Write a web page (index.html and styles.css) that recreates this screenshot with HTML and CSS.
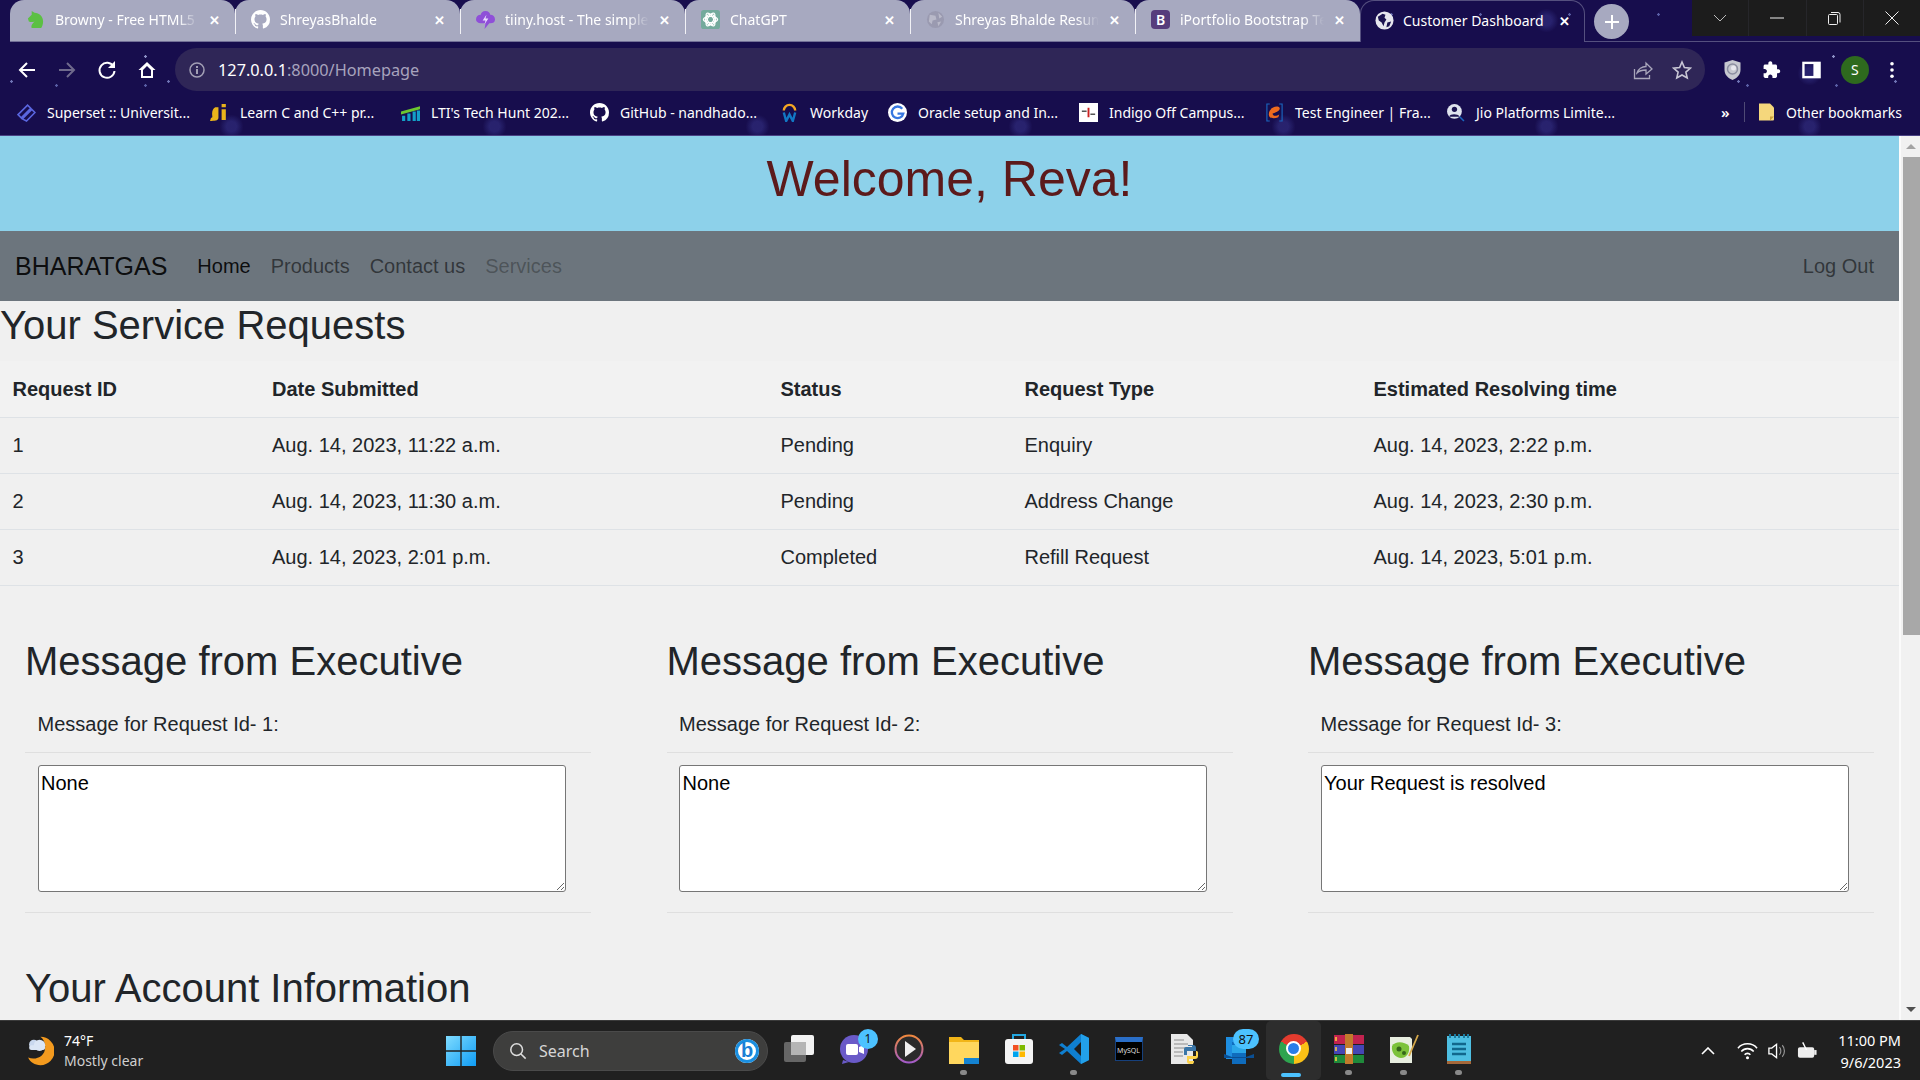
FILE: index.html
```html
<!DOCTYPE html>
<html lang="en">
<head>
<meta charset="utf-8">
<title>Customer Dashboard</title>
<link rel="stylesheet" href="styles.css">
</head>
<body>
<div class="window">
  <header class="chrome">
    <div class="tabstrip">
      <div class="tab">
        <svg class="fav" viewBox="0 0 20 20"><path fill="#5cc043" d="M6 1l3 2c5 0 9 4 9 9 0 3-1 5-2 7H6c-1-3 1-5 3-7-2 1-4 1-6 0L2 9l4-4z"/></svg>
        <span class="tab-title">Browny - Free HTML5</span><span class="tab-x">✕</span>
      </div>
      <div class="tab">
        <svg class="fav" viewBox="0 0 16 16"><path fill="#fff" d="M8 0C3.58 0 0 3.58 0 8c0 3.54 2.29 6.53 5.47 7.59.4.07.55-.17.55-.38 0-.19-.01-.82-.01-1.49-2.01.37-2.53-.49-2.69-.94-.09-.23-.48-.94-.82-1.13-.28-.15-.68-.52-.01-.53.63-.01 1.08.58 1.23.82.72 1.21 1.87.87 2.33.66.07-.52.28-.87.51-1.07-1.78-.2-3.64-.89-3.64-3.95 0-.87.31-1.59.82-2.15-.08-.2-.36-1.02.08-2.12 0 0 .67-.21 2.2.82.64-.18 1.32-.27 2-.27.68 0 1.36.09 2 .27 1.53-1.04 2.2-.82 2.2-.82.44 1.1.16 1.92.08 2.12.51.56.82 1.27.82 2.15 0 3.07-1.87 3.75-3.65 3.95.29.25.54.73.54 1.48 0 1.07-.01 1.93-.01 2.2 0 .21.15.46.55.38A8.013 8.013 0 0016 8c0-4.42-3.58-8-8-8z"/></svg>
        <span class="tab-title">ShreyasBhalde</span><span class="tab-x">✕</span>
      </div>
      <div class="tab">
        <svg class="fav" viewBox="0 0 20 20"><path fill="#8f4fd8" d="M10 1c3 0 5 2 5 4 3 0 5 2 5 5s-2 4-5 4h-1l-5 6 1-6H5c-3 0-5-2-5-4 0-3 2-5 5-5 0-2 2-4 5-4z"/><path fill="#e9dcff" d="M11 5l-4 6h3l-1 4 4-6h-3z"/></svg>
        <span class="tab-title">tiiny.host - The simple</span><span class="tab-x">✕</span>
      </div>
      <div class="tab">
        <svg class="fav" viewBox="0 0 20 20"><rect width="20" height="20" rx="3" fill="#74aa9c"/><g fill="none" stroke="#fff" stroke-width="1.300"><circle cx="10" cy="10" r="5.500"/><ellipse cx="10" cy="10" rx="7.500" ry="3.200" transform="rotate(60 10 10)"/><ellipse cx="10" cy="10" rx="7.500" ry="3.200" transform="rotate(-60 10 10)"/><ellipse cx="10" cy="10" rx="7.500" ry="3.200"/></g></svg>
        <span class="tab-title">ChatGPT</span><span class="tab-x">✕</span>
      </div>
      <div class="tab">
        <svg class="fav" viewBox="0 0 20 20"><circle cx="10" cy="10" r="9" fill="#9a9ab0"/><path fill="#b9b9c9" d="M4 5l6 1 1 4-4 1-1 4-3-3zM13 3l4 4-3 2zM12 13l4-1-3 5z"/></svg>
        <span class="tab-title">Shreyas Bhalde Resum</span><span class="tab-x">✕</span>
      </div>
      <div class="tab">
        <span class="fav fav-b">B</span>
        <span class="tab-title">iPortfolio Bootstrap Te</span><span class="tab-x">✕</span>
      </div>
      <div class="tab tab-active">
        <svg class="fav" viewBox="0 0 20 20"><circle cx="10" cy="10" r="9.500" fill="#e6e6ee"/><path fill="#1b1350" d="M3 6l5-3 3 1-1 3 2 2-2 3-1 4-2-4-3-2zM13 12l4-1-2 5-3 1z"/></svg>
        <span class="tab-title tab-title-active">Customer Dashboard</span><span class="tab-x">✕</span>
      </div>
      <div class="newtab"><svg viewBox="0 0 16 16" class="ico16"><path d="M8 1v14M1 8h14" stroke="#fff" stroke-width="2" fill="none"/></svg></div>
      <div class="winctl">
        <span class="ctl"><svg viewBox="0 0 14 8" class="ctl-i1"><path d="M1 1l6 6 6-6" fill="none" stroke="#bbb"/></svg></span>
        <span class="ctl"><svg viewBox="0 0 14 14" class="ctl-i"><path d="M0 7h14" stroke="#eee"/></svg></span>
        <span class="ctl"><svg viewBox="0 0 14 14" class="ctl-i"><path d="M3 1.500h7a2 2 0 0 1 2 2v8M.5 4.500a1 1 0 0 1 1-1h7a1 1 0 0 1 1 1v8a1 1 0 0 1-1 1h-7a1 1 0 0 1-1-1z" fill="none" stroke="#eee"/></svg></span>
        <span class="ctl"><svg viewBox="0 0 14 14" class="ctl-i"><path d="M.5.5l13 13M13.500.5l-13 13" stroke="#eee"/></svg></span>
      </div>
    </div>

    <div class="toolbar">
      <div class="nav-btns">
        <svg class="nav-i" viewBox="0 0 20 20"><path d="M18 10H3M10 3l-7 7 7 7" fill="none" stroke="#fff" stroke-width="2"/></svg>
        <svg class="nav-i" viewBox="0 0 20 20"><path d="M2 10h15M10 3l7 7-7 7" fill="none" stroke="#6f6a8c" stroke-width="2"/></svg>
        <svg class="nav-i" viewBox="0 0 20 20"><path d="M16.500 6.500A7.500 7.500 0 1 0 17.500 11" fill="none" stroke="#fff" stroke-width="2"/><path d="M18 1v7h-7z" fill="#fff"/></svg>
        <svg class="nav-i" viewBox="0 0 20 20"><path d="M10 2L1.500 10H4v8h12v-8h2.500zM6 10l4-4 4 4v6H6z" fill="#fff"/></svg>
      </div>
      <div class="omnibox">
        <svg class="info" viewBox="0 0 16 16"><circle cx="8" cy="8" r="7" fill="none" stroke="#a29fb5" stroke-width="1.500"/><path d="M7 7h2v5H7zM7 4h2v2H7z" fill="#a29fb5"/></svg>
        <span class="url"><span class="url-host">127.0.0.1</span>:8000/Homepage</span>
        <svg class="share" viewBox="0 0 20 20"><path d="M1.500 9v9.500h15V15M4 13c1-4 5-6.500 9-6.500V3l6 6-6 5v-4c-4 0-7 1-9 3z" fill="none" stroke="#a9a6bb" stroke-width="1.300"/></svg>
        <svg class="star" viewBox="0 0 20 20"><path d="M10 2l2.400 5.500 6 .6-4.500 4 1.300 5.900L10 15l-5.200 3 1.300-5.900-4.500-4 6-.6z" fill="none" stroke="#c9c7d5" stroke-width="1.600"/></svg>
      </div>
      <div class="ext">
        <svg class="ext-i" viewBox="0 0 18 20"><path d="M9 0l8 2.500V10c0 5-4 8.500-8 10-4-1.500-8-5-8-10V2.500z" fill="#c6c8d0"/><circle cx="9" cy="9" r="5" fill="none" stroke="#8b8ea0" stroke-width="1.500"/><circle cx="10" cy="8" r="2.500" fill="#e8e8ee"/></svg>
        <svg class="ext-i" viewBox="0 0 24 24"><path fill="#fff" d="M20.500 11H19V7c0-1.100-.9-2-2-2h-4V3.500C13 2.120 11.880 1 10.500 1S8 2.120 8 3.500V5H4c-1.100 0-1.990.9-1.990 2v3.800H3.500c1.490 0 2.700 1.210 2.700 2.700s-1.210 2.700-2.700 2.700H2V20c0 1.100.9 2 2 2h3.800v-1.500c0-1.490 1.210-2.700 2.700-2.700s2.700 1.210 2.700 2.700V22H17c1.100 0 2-.9 2-2v-4h1.500c1.380 0 2.500-1.120 2.500-2.500S21.880 11 20.500 11z"/></svg>
        <svg class="ext-i" viewBox="0 0 20 20"><rect x="1.500" y="2.500" width="17" height="15" fill="none" stroke="#fff" stroke-width="2.500"/><rect x="12" y="3" width="6" height="14" fill="#fff"/></svg>
        <span class="avatar">S</span>
        <svg class="dots" viewBox="0 0 6 20"><circle cx="3" cy="3" r="2" fill="#fff"/><circle cx="3" cy="10" r="2" fill="#fff"/><circle cx="3" cy="17" r="2" fill="#fff"/></svg>
      </div>
    </div>

    <div class="bookmarks">
      <div class="bm-grid">
        <div class="bm"><svg class="bm-i" viewBox="0 0 18 18"><g fill="none" stroke="#5a66e0" stroke-width="1.500"><path d="M1 11L10 2l3 3-9 9zM5 15l9-9 3 3-8 8z"/></g></svg>Superset :: Universit...</div>
        <div class="bm"><svg class="bm-i" viewBox="0 0 18 18"><path d="M5 4h3v10c0 3-4 3-8 3l1-3c2 0 1-1 1-4 0-3 1-5 3-6zM11 1h4v3h-4zM11 6h4v10h-4z" fill="#e9b31b"/></svg>Learn C and C++ pr...</div>
        <div class="bm"><svg class="bm-i" viewBox="0 0 18 18"><path d="M0 8l18-5v3L0 11z" fill="#6cc62f"/><path d="M1 12h3v5H1zM6 10h3v7H6zM11 8h3v9h-3zM15 7h3v10h-3z" fill="#13a0c8"/></svg>LTI's Tech Hunt 202...</div>
        <div class="bm"><svg class="bm-i" viewBox="0 0 16 16"><path fill="#fff" d="M8 0C3.58 0 0 3.58 0 8c0 3.54 2.29 6.53 5.47 7.59.4.07.55-.17.55-.38 0-.19-.01-.82-.01-1.49-2.01.37-2.53-.49-2.69-.94-.09-.23-.48-.94-.82-1.13-.28-.15-.68-.52-.01-.53.63-.01 1.08.58 1.23.82.72 1.21 1.87.87 2.33.66.07-.52.28-.87.51-1.07-1.78-.2-3.64-.89-3.64-3.95 0-.87.31-1.59.82-2.15-.08-.2-.36-1.02.08-2.12 0 0 .67-.21 2.2.82.64-.18 1.32-.27 2-.27.68 0 1.36.09 2 .27 1.53-1.04 2.2-.82 2.2-.82.44 1.1.16 1.92.08 2.12.51.56.82 1.27.82 2.15 0 3.07-1.87 3.75-3.65 3.95.29.25.54.73.54 1.48 0 1.07-.01 1.93-.01 2.2 0 .21.15.46.55.38A8.013 8.013 0 0016 8c0-4.42-3.58-8-8-8z"/></svg>GitHub - nandhado...</div>
        <div class="bm"><svg class="bm-i" viewBox="0 0 18 20"><path d="M3 8a6 6 0 0 1 12 0" fill="none" stroke="#f6a623" stroke-width="2.500"/><path d="M3 10l2.500 9L9 12l3.500 7L15 10" fill="none" stroke="#1278c4" stroke-width="2.500"/></svg>Workday</div>
        <div class="bm"><svg class="bm-i" viewBox="0 0 18 18"><circle cx="9" cy="9" r="9" fill="#fff"/><path d="M13.500 5.500A5.500 5.500 0 1 0 14.500 10H9" fill="none" stroke="#3777e0" stroke-width="2.200"/></svg>Oracle setup and In...</div>
        <div class="bm"><svg class="bm-i" viewBox="0 0 20 20"><rect width="20" height="20" fill="#fff"/><path d="M9 5h2v10H9z" fill="#c22"/><path d="M3 8h5v1.500H3zM12 11h5v1.500h-5z" fill="#555"/></svg>Indigo Off Campus...</div>
        <div class="bm"><svg class="bm-i" viewBox="0 0 18 20"><path d="M4 1H1v18h3M14 1h3v18h-3" fill="none" stroke="#1a66c0" stroke-width="1.200"/><path d="M3 12c0-6 6-9 10-8 3 1 2 5-6 7 0 3 4 3 7 1l-1 3c-5 2-10 1-10-3z" fill="#ee6a1e"/></svg>Test Engineer | Fra...</div>
        <div class="bm"><svg class="bm-i" viewBox="0 0 18 18"><circle cx="8" cy="8" r="7" fill="#dfe3ee"/><circle cx="8" cy="6" r="2.500" fill="#1b1350"/><path d="M3 13c1-3 8-3 10 0z" fill="#1b1350"/><path d="M13 13l4 4" stroke="#1a66c0" stroke-width="1.500"/></svg>Jio Platforms Limite...</div>
      </div>
      <div class="bm-tail">
        <span class="bm-more">»</span>
        <span class="bm-sep"></span>
        <svg class="bm-folder" viewBox="0 0 15 17"><path d="M0 0h11l4 4v12a1 1 0 0 1-1 1H0z" fill="#f5d77c"/><path d="M11 17v-4h4" fill="#caa13b"/></svg>
        <span class="bm-other">Other bookmarks</span>
      </div>
    </div>
  </header>

  <div class="viewport">
    <main class="page">
      <div class="banner"><h1 class="welcome">Welcome, Reva!</h1></div>
      <nav class="navbar">
        <a class="brand">BHARATGAS</a>
        <a class="link link-active">Home</a>
        <a class="link">Products</a>
        <a class="link">Contact us</a>
        <a class="link link-disabled">Services</a>
        <a class="link link-right">Log Out</a>
      </nav>
      <h2 class="title">Your Service Requests</h2>
      <table class="requests">
        <colgroup><col class="c1"><col class="c2"><col class="c3"><col class="c4"><col class="c5"></colgroup>
        <thead>
          <tr><th>Request ID</th><th>Date Submitted</th><th>Status</th><th>Request Type</th><th>Estimated Resolving time</th></tr>
        </thead>
        <tbody>
          <tr><td>1</td><td>Aug. 14, 2023, 11:22 a.m.</td><td>Pending</td><td>Enquiry</td><td>Aug. 14, 2023, 2:22 p.m.</td></tr>
          <tr><td>2</td><td>Aug. 14, 2023, 11:30 a.m.</td><td>Pending</td><td>Address Change</td><td>Aug. 14, 2023, 2:30 p.m.</td></tr>
          <tr><td>3</td><td>Aug. 14, 2023, 2:01 p.m.</td><td>Completed</td><td>Refill Request</td><td>Aug. 14, 2023, 5:01 p.m.</td></tr>
        </tbody>
      </table>
      <section class="messages">
        <article class="msg">
          <h2 class="title">Message from Executive</h2>
          <div class="card-head">Message for Request Id- 1:</div>
          <div class="card-body"><textarea class="note" readonly>None</textarea></div>
        </article>
        <article class="msg">
          <h2 class="title">Message from Executive</h2>
          <div class="card-head">Message for Request Id- 2:</div>
          <div class="card-body"><textarea class="note" readonly>None</textarea></div>
        </article>
        <article class="msg">
          <h2 class="title">Message from Executive</h2>
          <div class="card-head">Message for Request Id- 3:</div>
          <div class="card-body"><textarea class="note" readonly>Your Request is resolved</textarea></div>
        </article>
      </section>
      <h2 class="title account">Your Account Information</h2>
    </main>
    <aside class="scrollbar">
      <span class="arrow arrow-up"></span>
      <span class="thumb"></span>
      <span class="arrow arrow-down"></span>
    </aside>
  </div>

  <footer class="taskbar">
    <div class="weather">
      <svg class="weather-i" viewBox="0 0 30 36"><path d="M16 3a15 15 0 0 1 0 30c-6 0-11-3-13-8 8 3 18-1 18-11 0-5-2-9-5-11z" fill="#f39a1e"/><circle cx="9" cy="11" r="5" fill="#c9d8ee"/><circle cx="15" cy="12" r="6" fill="#dbe6f5"/><rect x="4" y="12" width="17" height="5" rx="2.500" fill="#dbe6f5"/></svg>
      <div class="weather-t"><span class="temp">74°F</span><span class="cond">Mostly clear</span></div>
    </div>
    <div class="start"><svg viewBox="0 0 30 30" class="start-i"><defs><linearGradient id="w" x1="0" y1="0" x2="1" y2="1"><stop offset="0" stop-color="#7fdcff"/><stop offset="1" stop-color="#0f9cf5"/></linearGradient></defs><path d="M0 0h14.300v14.300H0zM15.700 0H30v14.300H15.700zM0 15.700h14.300V30H0zM15.700 15.700H30V30H15.700z" fill="url(#w)"/></svg></div>
    <div class="searchbox">
      <svg class="search-i" viewBox="0 0 20 20"><circle cx="8.500" cy="8.500" r="6.500" fill="none" stroke="#ddd" stroke-width="1.700"/><path d="M13 13l5.500 5.500" stroke="#ddd" stroke-width="1.700"/></svg>
      <span class="search-t">Search</span>
      <span class="bing">b</span>
    </div>
    <div class="apps">
      <div class="app"><svg class="app-i" viewBox="0 0 30 30"><rect x="0" y="8" width="22" height="20" rx="2" fill="#666"/><rect x="7" y="1" width="23" height="20" rx="2" fill="#f2f2f2"/><rect x="7" y="8" width="15" height="13" fill="#b5b5b5"/></svg></div>
      <div class="app"><svg class="app-i" viewBox="0 0 30 30"><circle cx="15" cy="15" r="14" fill="#6a5ac8"/><path d="M4 26l-1 4 7-2z" fill="#6a5ac8"/><rect x="7" y="10" width="12" height="11" rx="2" fill="#fff"/><path d="M20 13l5-2v9l-5-2z" fill="#fff"/></svg><span class="badge badge-one">1</span></div>
      <div class="app"><svg class="app-i" viewBox="0 0 30 30"><defs><linearGradient id="p" x1="0" y1="0" x2="0" y2="1"><stop offset="0" stop-color="#f0883e"/><stop offset="1" stop-color="#a35bc8"/></linearGradient></defs><circle cx="15" cy="15" r="13.500" fill="#2b2b2b" stroke="url(#p)" stroke-width="2"/><path d="M11 7l11 8-11 8z" fill="#f0f0f0"/></svg></div>
      <div class="app app-dot"><svg class="app-i" viewBox="0 0 30 30"><path d="M0 3h12l3 3h15v24H0z" fill="#f2b518"/><path d="M0 8h30v22H0z" fill="#ffd75e"/><path d="M15 24h15v6H15z" fill="#1483d2"/></svg></div>
      <div class="app"><svg class="app-i" viewBox="0 0 30 30"><path d="M9 6V1h12v5" fill="none" stroke="#23a7e0" stroke-width="2"/><rect x="1" y="5" width="28" height="25" rx="3" fill="#f4f4f4"/><rect x="9" y="11" width="5.500" height="5.500" fill="#f25022"/><rect x="15.500" y="11" width="5.500" height="5.500" fill="#7fba00"/><rect x="9" y="17.500" width="5.500" height="5.500" fill="#00a4ef"/><rect x="15.500" y="17.500" width="5.500" height="5.500" fill="#ffb900"/></svg></div>
      <div class="app app-dot"><svg class="app-i" viewBox="0 0 30 30"><path d="M22 0l8 4v22l-8 4L8 17l-5 4-3-2 6-4-6-4 3-2 5 4z" fill="#0f7fd0"/><path d="M22 0l8 4v22l-8 4z" fill="#22a0ea"/><path d="M22 8l-7 7 7 7z" fill="#1e1e1e"/></svg></div>
      <div class="app"><div class="mysql"><span class="mysql-t">MySQL</span></div></div>
      <div class="app"><svg class="app-i" viewBox="0 0 30 30"><path d="M2 0h16l6 6v24H2z" fill="#e8e8e8"/><path d="M5 6h10M5 10h14M5 14h14M5 18h9M5 22h9" stroke="#aaa" stroke-width="1.500"/><path d="M19 11h5a3 3 0 0 1 3 3v3h-9v4h-3v-6a2 2 0 0 1 2-2h6v-1h-4z" fill="#3a76a8"/><path d="M27 17h1a2 2 0 0 1 1 2v3a3 3 0 0 1-3 3h-6v2h5v1a2 2 0 0 1-2 2h-2a3 3 0 0 1-3-2v-6h9z" fill="#fcd24a"/></svg></div>
      <div class="app"><svg class="app-i" viewBox="0 0 30 30"><path d="M2 3h20v22H2z" fill="#1e8ee0"/><path d="M8 8h14v22H8z" fill="#0f6cbd"/><path d="M0 20l8 3h14l8-3v4H0z" fill="#0a4f94"/><path d="M8 11h14v8H8z" fill="#2aa6e8"/></svg><span class="badge badge-wide">87</span></div>
      <div class="app app-current"><div class="chrome-logo"><span class="chrome-core"></span></div><span class="current-bar"></span></div>
      <div class="app app-dot"><svg class="app-i" viewBox="0 0 30 30"><rect x="0" y="1" width="30" height="9" fill="#c2234f"/><rect x="0" y="11" width="30" height="9" fill="#4546b5"/><rect x="0" y="21" width="30" height="8" fill="#1f8a3b"/><rect x="11" y="0" width="8" height="30" fill="#c27a2c"/><rect x="12" y="14" width="6" height="6" fill="#eee"/><path d="M2 3v4M2 13v4M2 23v4" stroke="#ffd23c" stroke-width="1.500"/></svg></div>
      <div class="app app-dot"><svg class="app-i" viewBox="0 0 30 30"><path d="M1 3h20l2 2v24H1z" fill="#e8eee0"/><path d="M3 12c3-5 12-5 17 0 1 6-2 12-8 12-5 0-10-5-9-12z" fill="#7cc23a"/><circle cx="10" cy="15" r="2.500" fill="#35661a"/><circle cx="15" cy="19" r="2" fill="#35661a"/><path d="M29 1L20 22" stroke="#d6a94a" stroke-width="1.800"/></svg></div>
      <div class="app app-dot"><svg class="app-i" viewBox="0 0 30 30"><rect x="3" y="2" width="24" height="26" fill="#4ebfe2"/><rect x="3" y="27" width="24" height="3" fill="#a5683a"/><path d="M6 0v4M11 0v4M15 0v4M20 0v4M24 0v4" stroke="#1c7ca0" stroke-width="2"/><path d="M8 10h14M8 15h14M8 20h14" stroke="#11678c" stroke-width="2.500"/></svg></div>
    </div>
    <div class="tray">
      <svg class="tray-caret" viewBox="0 0 14 8"><path d="M1 7l6-6 6 6" fill="none" stroke="#fff" stroke-width="1.600"/></svg>
      <svg class="tray-i" viewBox="0 0 22 20"><g fill="none" stroke="#fff" stroke-width="1.600"><path d="M1 7c5-6 15-6 20 0"/><path d="M4.500 10.500c3.500-4 9.500-4 13 0"/><path d="M8 14c1.500-2 4.500-2 6 0"/></g><circle cx="11" cy="17" r="1.600" fill="#fff"/></svg>
      <svg class="tray-i" viewBox="0 0 22 20"><path d="M2 7h3l5-4v14l-5-4H2z" fill="none" stroke="#fff" stroke-width="1.400"/><path d="M13 6c2 2 2 6 0 8M16 4c3 3 3 9 0 12" fill="none" stroke="#999" stroke-width="1.200"/></svg>
      <svg class="tray-i" viewBox="0 0 22 20"><rect x="1" y="6" width="17" height="11" rx="2" fill="#eee"/><rect x="18" y="9" width="2.500" height="5" fill="#eee"/><path d="M6 1l4 8" stroke="#fff" stroke-width="1.500"/></svg>
      <div class="clock"><span>11:00 PM</span><span>9/6/2023</span></div>
    </div>
  </footer>
</div>
</body>
</html>
```
FILE: styles.css
```css
* { box-sizing: border-box; }
html, body { margin: 0; padding: 0; height: 100%; overflow: hidden; }
body { background: #f0f0f0; font-family: "Liberation Sans", Arial, sans-serif; }
.window { width: 1920px; height: 1080px; display: flex; flex-direction: column; overflow: hidden; }

/* ---------- browser chrome ---------- */
.chrome {
  height: 136px; flex: none; color: #fff;
  font-family: "Noto Sans", "Open Sans", sans-serif;
  border-bottom: 1px solid #4b4285;
  background-color: #170d4d;
  background-image:
    radial-gradient(circle, #8f93c8 0 1px, transparent 1.500px),
    radial-gradient(circle, #6f74b4 0 1px, transparent 1.500px),
    radial-gradient(circle, #5a5fa6 0 1px, transparent 1.500px),
    radial-gradient(circle, rgba(60,60,150,.45) 0 5px, transparent 12px);
  background-size: 211px 97px, 157px 113px, 89px 71px, 263px 53px;
  background-position: 40px 8px, 90px 25px, 12px 50px, 100px 100px;
}
.tabstrip { height: 43px; display: flex; align-items: flex-start; padding-left: 10px; position: relative; }
.tabstrip::after { content: ""; position: absolute; left: 1584px; right: 0; top: 41px; height: 1px; background: #55507f; }
.tab {
  width: 225px; height: 42px; flex: none; display: flex; align-items: center;
  padding: 0 0 2px 16px; position: relative; background: #a7a9c0;
  border-radius: 14px 14px 0 0; border-bottom: 1px solid #726f97; font-size: 14px;
}
.tab + .tab::before { content: ""; position: absolute; left: 0; top: 9px; height: 25px; width: 1px; background: #f2f2f6; }
.tab-active + .newtab { margin-left: 9px; }
.tab-active { background: transparent; border: 1px solid #55507f; border-bottom: 0; padding-left: 14px; }
.tab-active::before { display: none; }
.fav { width: 19px; height: 19px; flex: none; }
.fav-b {
  background: #563d7c; border-radius: 4px; color: #fff; font-size: 14px; font-weight: 600;
  display: flex; align-items: center; justify-content: center;
}
.tab-title {
  margin-left: 10px; width: 144px; white-space: nowrap; overflow: hidden;
  -webkit-mask-image: linear-gradient(90deg, #000 85%, transparent);
  mask-image: linear-gradient(90deg, #000 85%, transparent);
}
.tab-title-active { margin-left: 9px; width: 146px; -webkit-mask-image: none; mask-image: none; }
.tab-x { margin-left: 1px; width: 28px; text-align: center; font-size: 13px; font-weight: 700; }
.newtab {
  width: 35px; height: 35px; margin-top: 4px; border-radius: 50%; background: #a7a9c0; flex: none;
  display: flex; align-items: center; justify-content: center;
}
.ico16 { width: 16px; height: 16px; }
.winctl { margin-left: auto; width: 228px; height: 36px; background: #1c1c1c; display: flex; }
.ctl { flex: 1; display: flex; align-items: center; justify-content: center; }
.ctl + .ctl { border-left: 1px solid #26262a; }
.ctl-i { width: 14px; height: 14px; }
.ctl-i1 { width: 14px; height: 8px; }

.toolbar { height: 49px; padding-top: 5px; display: flex; align-items: flex-start; }
.nav-btns { width: 175px; height: 43px; padding: 0 18px 0 17px; display: flex; align-items: center; justify-content: space-between; }
.nav-i { width: 20px; height: 20px; flex: none; }
.omnibox {
  width: 1530px; height: 43px; border-radius: 22px; background: #2f2657; display: flex; align-items: center;
  padding: 0 13px 0 14px;
}
.info { width: 16px; height: 16px; flex: none; }
.url { margin-left: 13px; font-size: 16.300px; color: #a7a3bd; white-space: nowrap; }
.url-host { color: #fff; }
.share { width: 20px; height: 20px; margin-left: auto; }
.star { width: 20px; height: 20px; margin-left: 19px; }
.ext { flex: 1; display: flex; align-items: center; height: 43px; padding: 0 25px 0 18px; justify-content: space-between; }
.ext-i { width: 19px; height: 20px; flex: none; }
.avatar {
  width: 28px; height: 28px; border-radius: 50%; background: #2e6a1e; font-size: 14px;
  display: flex; align-items: center; justify-content: center;
}
.dots { width: 6px; height: 18px; flex: none; }

.bookmarks { height: 43px; display: flex; align-items: center; padding-left: 17px; padding-bottom: 3px; font-size: 14px; }
.bm-grid { display: grid; grid-template-columns: 193px 191px 189px 190px 108px 191px 186px 181px 275px; }
.bm { display: flex; align-items: center; gap: 11px; white-space: nowrap; }
.bm-i { width: 19px; height: 19px; flex: none; }
.bm-tail { display: flex; align-items: center; flex: 1; }
.bm-more { font-size: 15px; width: 12px; font-weight: 600; }
.bm-sep { width: 1px; height: 20px; background: #4f4a75; margin: 0 14px 0 11px; }
.bm-folder { width: 15px; height: 18px; flex: none; }
.bm-other { margin-left: 12px; white-space: nowrap; }

/* ---------- page ---------- */
.viewport { flex: 1; display: flex; min-height: 0; }
.page { width: 1899px; flex: none; overflow: hidden; color: #212529; font-size: 20px; line-height: 30px; }
.banner { height: 95px; background: #8dd1ea; padding-top: 13px; }
.welcome { margin: 0; font-size: 50px; line-height: 60px; font-weight: 400; text-align: center; color: #5c1a1b; }
.navbar { height: 70px; background: #6c757d; display: flex; align-items: center; padding: 0 15px; }
.brand { font-size: 25px; color: rgba(0,0,0,.9); margin-right: 20px; line-height: 37px; }
.link { padding: 0 10px; color: rgba(0,0,0,.55); }
.link-active { color: rgba(0,0,0,.9); }
.link-disabled { color: rgba(0,0,0,.3); }
.link-right { margin-left: auto; }
.title { margin: 0 0 12px; font-size: 40px; line-height: 48px; font-weight: 400; }
.requests { width: 1899px; table-layout: fixed; border-collapse: collapse; }
.c1 { width: 259.500px; } .c2 { width: 508.500px; } .c3 { width: 244px; } .c4 { width: 349px; }
.requests th, .requests td { padding: 12.500px; text-align: left; border-bottom: 1px solid #dee2e6; line-height: 30px; height: 56px; }
.requests th { font-weight: 700; background: #f2f2f2; }
.messages { display: grid; grid-template-columns: repeat(3, 566px); column-gap: 75.500px; padding-left: 25px; margin-top: 51px; }
.card-head { padding: 12.500px; border-bottom: 1px solid #dfdfdf; height: 56px; }
.card-body { padding: 12px 12.500px 20px; border-bottom: 1px solid #dfdfdf; }
.note {
  display: block; width: 528px; height: 127px; padding: 2.500px; border: 1px solid #767676; border-radius: 3px;
  background: #fff; color: #000; font-family: "Liberation Sans", Arial, sans-serif; font-size: 20px; line-height: 30px; outline: 0;
}
.account { margin: 51px 0 0 25px; }

/* ---------- scrollbar ---------- */
.scrollbar { width: 21px; flex: none; background: #f1f1f1; display: flex; flex-direction: column; align-items: flex-end; border-left: 2px solid #fbfbfb; }
.arrow { width: 100%; height: 21px; flex: none; display: flex; align-items: center; justify-content: center; }
.arrow::after { content: ""; border-left: 5px solid transparent; border-right: 5px solid transparent; }
.arrow-up::after { border-bottom: 5px solid #a3a3a3; }
.arrow-down { margin-top: auto; }
.arrow-down::after { border-top: 5px solid #505050; }
.thumb { width: 17px; height: 478px; background: #a8a8a8; }

/* ---------- taskbar ---------- */
.taskbar {
  height: 60px; flex: none; background: #202020; border-top: 1px solid #3a3a3a; display: flex; align-items: center;
  color: #fff; font-family: "Noto Sans", "Open Sans", sans-serif;
}
.weather { width: 446px; flex: none; display: flex; align-items: center; padding-left: 25px; gap: 10px; }
.weather-i { width: 29px; height: 34px; flex: none; }
.weather-t { display: flex; flex-direction: column; font-size: 14px; line-height: 20px; }
.temp { color: #fff; }
.cond { color: #cfcfcf; }
.start { width: 47px; flex: none; }
.start-i { width: 30px; height: 30px; display: block; }
.searchbox {
  width: 275px; height: 40px; flex: none; border-radius: 20px; background: #3e3e3d; border: 1px solid #4a4a4a;
  display: flex; align-items: center; padding: 0 8px 0 15px;
}
.search-i { width: 18px; height: 18px; flex: none; }
.search-t { margin-left: 12px; font-size: 16px; color: #d6d6d6; }
.bing {
  margin-left: auto; width: 24px; height: 24px; border-radius: 50%; background: #fff; color: #1a7fd6;
  font: 700 20px/22px "Liberation Sans", sans-serif; text-align: center; box-shadow: inset 0 0 0 3px #1a8fe0;
}
.apps { display: flex; margin-left: 3px; height: 60px; }
.app { width: 55px; height: 59px; flex: none; position: relative; display: flex; align-items: center; justify-content: center; padding-bottom: 3px; }
.app-i { width: 30px; height: 30px; }
.app-dot::after {
  content: ""; position: absolute; left: 50%; margin-left: -3.500px; bottom: 5px; width: 7px; height: 5px;
  border-radius: 3px; background: #8a8a8a;
}
.badge {
  position: absolute; top: 8px; height: 20px; border-radius: 10px; background: #4cc2ff; color: #111;
  display: flex; align-items: center; justify-content: center; font-size: 12px;
}
.badge-one { left: 32px; width: 20px; }
.badge-wide { left: 22px; width: 26px; top: 8px; font-size: 13px; }
.mysql {
  width: 28px; height: 24px; background: #000; border: 1px solid #16407c; border-top: 5px solid #2a6fc9;
  display: flex; align-items: center; justify-content: center; overflow: hidden;
}
.mysql-t { font-size: 7px; line-height: 1; color: #ddd; }
.app-current { background: #2d2d2d; border-radius: 5px; }
.chrome-logo {
  width: 30px; height: 30px; border-radius: 50%; display: flex; align-items: center; justify-content: center;
  background: conic-gradient(from -60deg, #e33b2e 0 120deg, #fbc116 120deg 240deg, #2ea44f 240deg 360deg);
}
.chrome-core { width: 15px; height: 15px; border-radius: 50%; background: #2a7de8; border: 2.500px solid #fff; }
.current-bar { position: absolute; left: 15px; bottom: 3px; width: 20px; height: 4px; border-radius: 2px; background: #4cc2ff; }
.tray { margin-left: auto; display: flex; align-items: center; height: 100%; padding-right: 19px; }
.tray-caret { width: 14px; height: 8px; margin-right: 22px; }
.tray-i { width: 21px; height: 20px; margin-right: 9px; }
.clock { margin-left: 11px; display: flex; flex-direction: column; align-items: flex-end; font-size: 14.500px; line-height: 22px; }
```
